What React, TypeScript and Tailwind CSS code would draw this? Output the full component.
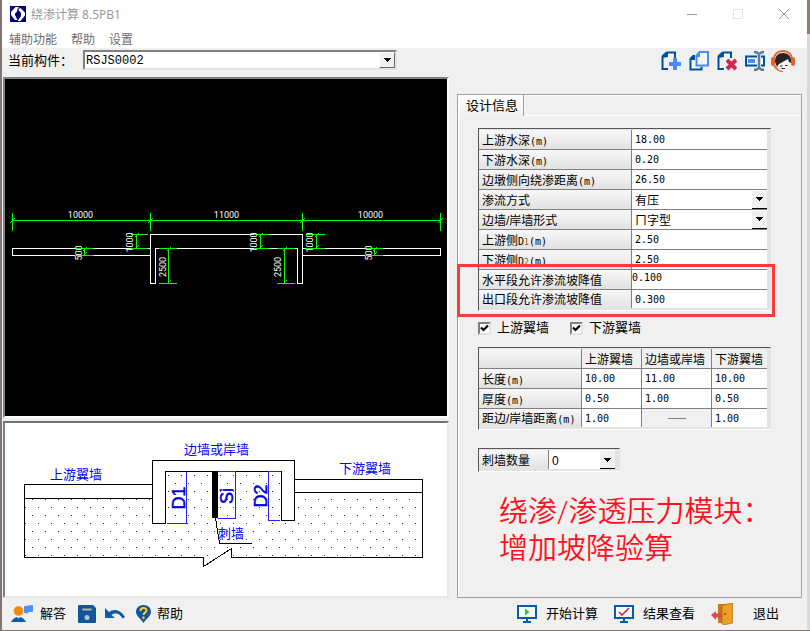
import type { ReactNode } from "react";
import clsx from "clsx";

const MENUS = ["辅助功能", "帮助", "设置"];

const DESIGN_ROWS: { id: string; label: ReactNode; unit?: string; value: string; select?: boolean; editing?: boolean }[] = [
  { id: "up-depth", label: "上游水深", unit: "(m)", value: "18.00" },
  { id: "down-depth", label: "下游水深", unit: "(m)", value: "0.20" },
  { id: "distance", label: "边墩侧向绕渗距离", unit: "(m)", value: "26.50" },
  { id: "mode", label: "渗流方式", value: "有压", select: true },
  { id: "shape", label: "边墙/岸墙形式", value: "ㄇ字型", select: true },
  { id: "d1", label: <>上游侧<Sub index="1" /></>, unit: "(m)", value: "2.50" },
  { id: "d2", label: <>下游侧<Sub index="2" /></>, unit: "(m)", value: "2.50" },
  { id: "slope-h", label: "水平段允许渗流坡降值", value: "0.100", editing: true },
  { id: "slope-o", label: "出口段允许渗流坡降值", value: "0.300" },
];

const WALL_COLUMNS = ["上游翼墙", "边墙或岸墙", "下游翼墙"];

const WALL_ROWS: { label: string; values: (string | null)[] }[] = [
  { label: "长度", values: ["10.00", "11.00", "10.00"] },
  { label: "厚度", values: ["0.50", "1.00", "0.50"] },
  { label: "距边/岸墙距离", values: ["1.00", null, "1.00"] },
];

const LABEL_CELL =
  "border-r border-[#808080] bg-linear-to-b from-[#f8f8f8] to-[#e2e2e2] p-0 pl-[3px] text-left text-xs leading-5 font-normal whitespace-nowrap";
const VALUE_CELL = "border-[#808080] bg-white p-0";
const ROW = "h-5 border-b";
const LAST_ROW = "h-[18px]";
const VALUE_INPUT =
  "block h-[18px] w-full bg-transparent px-[3px] pt-px font-['DejaVu_Sans_Mono','Noto_Sans_CJK_SC',monospace] text-[10px] leading-[18px] outline-none";

function Sub({ index }: { index: string }) {
  return (
    <>
      <span className="font-['DejaVu_Sans_Mono',monospace] text-[10px]">D</span>
      <span className="font-['DejaVu_Sans_Mono',monospace] text-[8px] text-[#8a5a20]">{index}</span>
    </>
  );
}

function Unit({ children }: { children: ReactNode }) {
  return <span className="font-['DejaVu_Sans_Mono',monospace] text-[10px]">{children}</span>;
}

function Arrow() {
  return (
    <svg className="h-1 w-[7px]" viewBox="0 0 7 4" shapeRendering="crispEdges">
      <path d="M0 0h7v1H6v1H5v1H4v1H3V3H2V2H1V1H0z" fill="#000" />
    </svg>
  );
}

function CellSelect({ id, value }: { id: string; value: string }) {
  return (
    <div className="relative flex h-[18px] items-center">
      <select
        id={id}
        defaultValue={value}
        className="h-[18px] w-full appearance-none bg-white pt-px pl-[3px] text-xs leading-[18px] outline-none"
      >
        <option>{value}</option>
      </select>
      <span className="pointer-events-none absolute inset-y-0 right-0 flex w-[15px] items-center justify-center border-b border-black bg-[#f0f0f0]">
        <Arrow />
      </span>
    </div>
  );
}

function Frame({ children, className }: { children: ReactNode; className?: string }) {
  return (
    <div
      className={clsx(
        "border border-t-[#555] border-r-[#e3e3e3] border-b-white border-l-[#555] bg-[#e3e3e3] pt-px pr-[3px] pb-[2px]",
        className,
      )}
    >
      {children}
    </div>
  );
}

interface IVDim {
  x: number;
  y1: number;
  y2: number;
  from: number;
  to: number;
  textX: number;
  children: string;
}

/* Dimension drawn vertically, with its value beside the line */
function VDim({ x, y1, y2, from, to, textX, children }: IVDim) {
  const cy = (y1 + y2) / 2 + 1;
  return (
    <g>
      <path
        d={`M${from} ${y1}H${to}M${from} ${y2}H${to}M${x} ${y1}V${y2}M${x - 2} ${y1 + 3}l4 -4M${x - 2} ${y2 + 1}l4 -4`}
        stroke="#00ff00"
        fill="none"
      />
      <text transform={`translate(${textX + 4} ${cy}) rotate(-90)`} textAnchor="middle" fill="#fff">
        {children}
      </text>
    </g>
  );
}

function CadDrawing() {
  return (
    <svg
      className="block w-full bg-black font-['Liberation_Sans_Narrow','Roboto',sans-serif] text-[9px]"
      viewBox="5 79 442 337"
      shapeRendering="crispEdges"
    >
      <path
        d="M12.5 220.5H440.5M12.5 213V231M150.5 213V231M302.5 213V231M440.5 213V231M10 223l5 -5M148 223l5 -5M300 223l5 -5M438 223l5 -5"
        stroke="#00ff00"
        fill="none"
      />
      <g stroke="#fff" fill="none">
        <path d="M150.5 248.5H12.5V255.5H150.5" />
        <path d="M150.5 234.5H302.5V283.5H297.5V248.5H155.5V283.5H150.5Z" />
        <path d="M302.5 248.5H440.5V255.5H302.5" />
      </g>
      <g textAnchor="middle" fill="#fff">
        <text x="80.5" y="218">10000</text>
        <text x="226.5" y="218">11000</text>
        <text x="370.5" y="218">10000</text>
      </g>
      <VDim x={84.5} y1={248.5} y2={255.5} from={75} to={93} textX={78}>500</VDim>
      <VDim x={136.5} y1={234.5} y2={248.5} from={131} to={148} textX={129}>1000</VDim>
      <VDim x={168.5} y1={248.5} y2={283.5} from={159} to={177} textX={162}>2500</VDim>
      <VDim x={260.5} y1={234.5} y2={248.5} from={254} to={269} textX={253}>1000</VDim>
      <VDim x={284.5} y1={248.5} y2={283.5} from={277} to={295} textX={277}>2500</VDim>
      <VDim x={316.5} y1={234.5} y2={248.5} from={306} to={325} textX={309}>1000</VDim>
      <VDim x={374.5} y1={248.5} y2={255.5} from={365} to={383} textX={368}>500</VDim>
    </svg>
  );
}

function WallDiagram() {
  return (
    <svg
      className="block w-full bg-white font-['Liberation_Sans','Noto_Sans_CJK_SC',sans-serif]"
      viewBox="5 423 442 173"
      shapeRendering="crispEdges"
    >
      <defs>
        <pattern id="soil" x="28" y="499" width="13" height="16" patternUnits="userSpaceOnUse">
          <rect x="4" y="0" width="1" height="1" fill="#333" />
          <rect x="10" y="8" width="1" height="1" fill="#333" />
        </pattern>
      </defs>
      <path
        d="M24 498H152V523H166V472H281V520H294V493H422V557H231V548L203 566V557H24Z"
        fill="url(#soil)"
      />
      <g stroke="#000" fill="none">
        <path d="M152.5 484.5H24.5V557.5H203.5V566.5L231.5 548.5V557.5H422.5V479.5H294.5" />
        <path d="M24.5 498.5H152.5M294.5 492.5H422.5" />
        <path d="M152.5 460.5H294.5V520.5H281.5V471.5H165.5V523.5H152.5Z" />
        <path d="M215.5 518L219.5 543.5H252" />
      </g>
      <rect x="212" y="472" width="6" height="46" fill="#000" />
      <g stroke="#2020ff" fill="none">
        <path d="M186.5 472V523.5M167 523.5H188" />
        <path d="M218 471.5H235.5V518.5H218" />
        <path d="M281 471.5H268.5V520.5H280" />
      </g>
      <g fill="#0000d8" stroke="#0000d8" strokeWidth="0.5" textAnchor="middle" className="text-[18px]">
        <text transform="translate(185 498) rotate(-90)">D1</text>
        <text transform="translate(233 496) rotate(-90)">Si</text>
        <text transform="translate(267 496) rotate(-90)">D2</text>
      </g>
      <g fill="#0000ff" className="text-[13px]">
        <text x="50" y="479">上游翼墙</text>
        <text x="184" y="454">边墙或岸墙</text>
        <text x="339" y="473">下游翼墙</text>
        <text x="218" y="538">刺墙</text>
      </g>
    </svg>
  );
}

function AppLogo() {
  return (
    <svg className="size-4" viewBox="0 0 16 16">
      <rect width="16" height="16" fill="#00007b" />
      <path d="M9 1H5.500L1 6v3l4 5h2.500L5 9V7.500L9.500 3z" fill="#fff" />
      <path d="M10.500 2 15 6.500v3L10.500 15H7.500L11 10V7L8.500 4z" fill="#fff" />
      <path d="M8.500 1.500 7.500 5l3 3" fill="none" stroke="#00007b" />
    </svg>
  );
}

function AddIcon() {
  return (
    <svg className="h-5 w-5" viewBox="0 0 20 20">
      <path d="M7 18H1.500V5.500L6 1.500H14V7" fill="#f4f4f4" stroke="#00519c" strokeWidth="2" />
      <path d="M1 7V4.500L5 1h2v5z" fill="#00519c" />
      <path d="M14 7v12M8 13h12" stroke="#4a8cff" strokeWidth="4" />
    </svg>
  );
}

function CopyIcon() {
  return (
    <svg className="h-5 w-5" viewBox="0 0 20 20">
      <path d="M6 5H4.500L1.500 8V18.500H12.500V15.500" fill="#f4f4f4" stroke="#00519c" strokeWidth="2" />
      <path d="M1 9V7l3-3h2v5z" fill="#00519c" />
      <path d="M7.500 14.500V4.500L10.500 1H19V14.500z" fill="#f3f6fb" stroke="#4a8cff" strokeWidth="2" />
      <path d="M7 6V4l3-3h1v5z" fill="#4a8cff" />
    </svg>
  );
}

function DeleteIcon() {
  return (
    <svg className="h-5 w-5" viewBox="0 0 20 20">
      <path d="M7 18H1.500V5.500L6 1.500H14V7" fill="#f4f4f4" stroke="#00519c" strokeWidth="2" />
      <path d="M1 7V4.500L5 1h2v5z" fill="#00519c" />
      <path d="m10 9 9 9M19 9l-9 9" stroke="#cc2952" strokeWidth="4" />
    </svg>
  );
}

function RenameIcon() {
  return (
    <svg className="h-5 w-5" viewBox="0 0 20 20">
      <path d="M12 5.500H1V14.500H12M16 5.500H19V14.500H16" fill="#f4f4f4" stroke="#00519c" strokeWidth="2" />
      <rect x="3" y="8" width="7" height="4" fill="#4a8cff" />
      <path d="M9 1.200h2.500l2.500 2 2.500-2H19M9 18.800h2.500l2.500-2 2.500 2H19M14 3v14" stroke="#60808f" strokeWidth="2.400" fill="none" />
    </svg>
  );
}

function ServiceIcon() {
  return (
    <svg className="h-[22px] w-6" viewBox="0 0 24 22">
      <path d="M3 10C3 4 7 1 12 1s9 3 9 9" fill="none" stroke="#e4642c" strokeWidth="2" />
      <path d="M3 15c2 4 4 6 9 6" fill="none" stroke="#e4642c" strokeWidth="2" />
      <rect x="0" y="7" width="4" height="9" rx="2" fill="#e4642c" />
      <rect x="20" y="7" width="4" height="9" rx="2" fill="#e4642c" />
      <path d="M5 9h14v5c0 4-3 7-7 7s-7-3-7-7z" fill="#f8f5f3" />
      <path d="M4 12C4 6 7 3 12 3s9 3 8 10l-2-1-1-3-9 5-2 3z" fill="#2a2524" />
      <path d="M9 16h2.500M14 15.500h2.500M10.500 18.500h3.500" stroke="#2a2524" strokeWidth="1.200" />
    </svg>
  );
}

function AnswerIcon() {
  return (
    <svg className="h-[18px] w-[22px]" viewBox="0 0 22 18">
      <path d="M14 1l7-1q1 0 1 1v5q0 1-1 1h-3l-3 2V8h-1q-1 0-1-1V2q0-1 1-1z" fill="#4f90ff" />
      <circle cx="7.500" cy="6" r="4.800" fill="#ee8d0b" />
      <path d="M0 17q2-4 6-5l1.500 1.500L9 12q4 1 6 5z" fill="#0b5ba8" />
    </svg>
  );
}

function SaveIcon() {
  return (
    <svg className="h-[18px] w-[18px]" viewBox="0 0 18 18">
      <path d="M1 0h14l3 3v14q0 1-1 1H1q-1 0-1-1V1q0-1 1-1z" fill="#11569c" />
      <rect x="4" y="3" width="10" height="3" fill="#60808f" />
      <path d="M5 4.500h8" stroke="#b4c4d0" />
      <circle cx="9" cy="12.500" r="2.500" fill="#b4c4d0" />
    </svg>
  );
}

function UndoIcon() {
  return (
    <svg className="h-3 w-5" viewBox="0 0 20 12">
      <path d="M0 0v10h10L6.500 7C11 4 15 6 17.500 10.500L20 9C16 2 9 0 4 4z" fill="#0b5ba8" />
    </svg>
  );
}

function HelpIcon() {
  return (
    <svg className="h-[18px] w-[15px]" viewBox="0 0 15 18">
      <path d="M7.500 0C3 0 0 3 0 7s5 7 7.500 11C10 14 15 11 15 7s-3-7-7.500-7z" fill="#11569c" />
      <path d="M4.500 6C4.500 2 10.500 2 10.500 5.500c0 2-3 2-3 4.500M7.500 11.500v2.500" stroke="#ffcb2e" strokeWidth="2" fill="none" />
    </svg>
  );
}

function MonitorIcon({ children }: { children: ReactNode }) {
  return (
    <svg className="h-[18px] w-5" viewBox="0 0 20 18">
      <rect x="1" y="1" width="18" height="12" fill="#f8fbff" stroke="#0b5ba8" strokeWidth="2" />
      <path d="M10 13v4M6 17h8" stroke="#0b5ba8" strokeWidth="2" />
      {children}
    </svg>
  );
}

function ExitIcon() {
  return (
    <svg className="h-[22px] w-[22px]" viewBox="0 0 22 22">
      <path d="M7 1h14v19H7z" fill="#c77a18" />
      <path d="M11 2 21.500 0v20L13 22l-2-1z" fill="#efa024" stroke="#a65a0b" strokeWidth=".6" />
      <path d="M0 12l5-4v2.500h6v4H5V17z" fill="#e04848" />
      <circle cx="14" cy="11" r="1" fill="#7a4100" />
    </svg>
  );
}

function ToolButton({ icon, label, className }: { icon: ReactNode; label: string; className?: string }) {
  return (
    <button type="button" className={clsx("flex items-center text-[13px] leading-4 whitespace-nowrap", className)}>
      {icon}
      {label}
    </button>
  );
}

function Check({ label }: { label: string }) {
  return (
    <label className="flex items-center gap-[6px] text-[13px] leading-4">
      <span className="relative flex">
        <input
          type="checkbox"
          defaultChecked
          className="peer size-[13px] appearance-none border-2 border-t-[#808080] border-r-[#e3e3e3] border-b-[#e3e3e3] border-l-[#808080] bg-white"
        />
        <svg className="pointer-events-none absolute inset-0 hidden size-[13px] peer-checked:block" viewBox="0 0 13 13">
          <path d="M3 5.500 5.500 8 10 3.500" stroke="#000" strokeWidth="2.200" fill="none" />
        </svg>
      </span>
      {label}
    </label>
  );
}

export default function App() {
  return (
    <div className="flex min-h-screen bg-[#82756e] pb-px pl-[2px] font-['Liberation_Sans','Noto_Sans_CJK_SC',sans-serif] text-black">
      <div className="flex min-w-0 flex-1 flex-col bg-[#f0f0f0]">
        {/* Title bar */}
        <header className="bg-white">
          <div className="flex h-7 items-center pr-[17px] pl-2">
            <AppLogo />
            <h1 className="ml-[5px] pt-px font-['Noto_Sans','Noto_Sans_CJK_SC',sans-serif] text-xs leading-4 text-[#999]">
              绕渗计算 8.5PB1
            </h1>
            <div className="ml-auto flex gap-[34px] text-[#999]">
              <button type="button" aria-label="最小化">
                <svg className="size-3" viewBox="0 0 12 12"><path d="M1 6.500h10" stroke="currentColor" /></svg>
              </button>
              <button type="button" aria-label="最大化" disabled>
                <svg className="size-3" viewBox="0 0 12 12"><path d="M1.500 1.500h9v9h-9z" stroke="#e3e3e3" fill="none" /></svg>
              </button>
              <button type="button" aria-label="关闭">
                <svg className="size-3" viewBox="0 0 12 12"><path d="m1 1 10 10M11 1 1 11" stroke="currentColor" /></svg>
              </button>
            </div>
          </div>
          <nav className="flex h-5 gap-[14px] pt-1 pl-[7px] text-xs leading-4 text-[#6d6d6d]">
            {MENUS.map((menu) => (
              <button key={menu} type="button">{menu}</button>
            ))}
          </nav>
        </header>

        {/* Component picker and tools */}
        <div className="flex h-[29px] items-start pt-[2px] pr-3 pl-[6px]">
          <label htmlFor="component" className="w-[75px] text-[13px] leading-[22px] whitespace-nowrap">当前构件：</label>
          <div className="relative w-[314px]">
            <select
              id="component"
              defaultValue="RSJS0002"
              className="block h-5 w-full appearance-none border-2 border-t-[#808080] border-r-[#e3e3e3] border-b-[#e3e3e3] border-l-[#808080] bg-white pt-px pl-px font-['Liberation_Mono',monospace] text-xs leading-4 outline-none"
            >
              <option>RSJS0002</option>
            </select>
            <span className="pointer-events-none absolute inset-y-[2px] right-[2px] flex w-4 items-center justify-center border border-t-white border-r-[#696969] border-b-[#696969] border-l-white bg-[#f0f0f0]">
              <Arrow />
            </span>
          </div>
          <div className="ml-auto flex items-center gap-2">
            <button type="button" aria-label="新增"><AddIcon /></button>
            <button type="button" aria-label="复制"><CopyIcon /></button>
            <button type="button" aria-label="删除"><DeleteIcon /></button>
            <button type="button" aria-label="重命名"><RenameIcon /></button>
            <button type="button" aria-label="客服" className="-ml-[2px]"><ServiceIcon /></button>
          </div>
        </div>

        <main className="grid flex-1 grid-cols-[446fr_345fr] gap-2 pr-[5px] pl-px">
          {/* Drawings */}
          <div className="flex min-w-0 flex-col gap-[3px]">
            <div className="border-2 border-t-[#808080] border-r-white border-b-white border-l-[#808080]">
              <CadDrawing />
            </div>
            <div className="flex-1 border-2 border-t-[#707070] border-r-[#e8e8e8] border-b-[#e8e8e8] border-l-[#808080] bg-white">
              <WallDiagram />
            </div>
          </div>

          {/* Design data */}
          <section className="mt-[17px] min-w-0 border border-[#a0a0a0] shadow-[inset_1px_1px_0_#fff]">
            <div className="flex h-[21px] border-b border-white">
              <button
                type="button"
                className="ml-px h-[21px] border-r border-[#a0a0a0] bg-linear-to-b from-white to-[#f0f0f0] pr-[5px] pl-[7px] text-[13px] leading-5"
              >
                设计信息
              </button>
            </div>

            <div className="pt-3 pr-[30px] pl-5">
              <div className="relative">
                <Frame>
                  <table className="w-full table-fixed border-separate border-spacing-0">
                    <tbody>
                      {DESIGN_ROWS.map((row, i) => {
                        const rowClass = i === DESIGN_ROWS.length - 1 ? LAST_ROW : ROW;
                        return (
                          <tr key={row.id}>
                            <th scope="row" className={clsx(LABEL_CELL, rowClass, "w-[153px]")}>
                              <label htmlFor={row.id} className="block h-[18px]">
                                {row.label}
                                {row.unit && <Unit>{row.unit}</Unit>}
                              </label>
                            </th>
                            <td className={clsx(VALUE_CELL, rowClass)}>
                              {row.select ? (
                                <CellSelect id={row.id} value={row.value} />
                              ) : (
                                <input
                                  id={row.id}
                                  defaultValue={row.value}
                                  className={clsx(VALUE_INPUT, row.editing && "-mt-1 pl-0")}
                                />
                              )}
                            </td>
                          </tr>
                        );
                      })}
                    </tbody>
                  </table>
                </Frame>
                {/* Highlight round the slope limits */}
                <div className="pointer-events-none absolute top-[136px] right-[-4px] left-[-21px] h-[53px] border-[3px] border-[#fb3a3a]" />
              </div>

              <div className="flex h-9 items-center gap-[21px] pb-[2px]">
                <Check label="上游翼墙" />
                <Check label="下游翼墙" />
              </div>

              <Frame>
                <table className="w-full table-fixed border-separate border-spacing-0">
                  <thead>
                    <tr>
                      <td className={clsx(LABEL_CELL, ROW, "w-[103px]")} />
                      {WALL_COLUMNS.map((name, i) => (
                        <th
                          key={name}
                          scope="col"
                          className={clsx(
                            "h-5 border-b border-[#808080] bg-[#f0f0f0] p-0 pl-[3px] text-left text-xs leading-5 font-normal whitespace-nowrap",
                            i === 0 && "w-[60px] border-r",
                            i === 1 && "w-[70px] border-r",
                          )}
                        >
                          <div className="h-[18px]">{name}</div>
                        </th>
                      ))}
                    </tr>
                  </thead>
                  <tbody>
                    {WALL_ROWS.map((row, r) => {
                      const rowClass = r === WALL_ROWS.length - 1 ? LAST_ROW : ROW;
                      return (
                        <tr key={row.label}>
                          <th scope="row" className={clsx(LABEL_CELL, rowClass)}>
                            <div className="h-[18px]">
                              {row.label}
                              <Unit>(m)</Unit>
                            </div>
                          </th>
                          {row.values.map((value, i) => (
                            <td key={WALL_COLUMNS[i]} className={clsx(VALUE_CELL, rowClass, i < 2 && "border-r")}>
                              {value === null ? (
                                <div className="flex h-[18px] items-center justify-center bg-[#f0f0f0]">
                                  <span className="w-[18px] border-t border-[#808080]" />
                                </div>
                              ) : (
                                <input
                                  aria-label={`${WALL_COLUMNS[i]} ${row.label}`}
                                  defaultValue={value}
                                  className={VALUE_INPUT}
                                />
                              )}
                            </td>
                          ))}
                        </tr>
                      );
                    })}
                  </tbody>
                </table>
              </Frame>

              <Frame className="mt-[18px] flex h-6 w-[142px]">
                <label htmlFor="spur-count" className={clsx(LABEL_CELL, "w-[70px] pt-px")}>
                  刺墙数量
                </label>
                <div className="w-[66px] bg-white pt-px">
                  <CellSelect id="spur-count" value="0" />
                </div>
              </Frame>

              <p className="mt-[22px] pl-[21px] font-['Roboto','Noto_Sans_CJK_SC',sans-serif] text-[29px] leading-[37px] font-[350] whitespace-nowrap text-[#ff1020]">
                绕渗/渗透压力模块：
                <br />
                增加坡降验算
              </p>
            </div>
          </section>
        </main>

        {/* Actions */}
        <footer className="flex h-8 items-center justify-between pr-7 pl-[9px]">
          <div className="flex items-center">
            <ToolButton icon={<AnswerIcon />} label="解答" className="gap-[7px]" />
            <button type="button" aria-label="保存" className="ml-3"><SaveIcon /></button>
            <button type="button" aria-label="撤销" className="ml-[9px]"><UndoIcon /></button>
            <ToolButton icon={<HelpIcon />} label="帮助" className="ml-[11px] gap-[6px]" />
          </div>
          <div className="flex items-center gap-4">
            <ToolButton
              icon={<MonitorIcon><path d="M8 3.500v7L12.500 7z" fill="#00e020" /></MonitorIcon>}
              label="开始计算"
              className="gap-[9px]"
            />
            <ToolButton
              icon={<MonitorIcon><path d="m5 7 3 3 7-7" stroke="#cc2952" strokeWidth="1.600" fill="none" /></MonitorIcon>}
              label="结果查看"
              className="gap-[9px]"
            />
            <ToolButton icon={<ExitIcon />} label="退出" className="gap-5" />
          </div>
        </footer>
      </div>

      {/* Desktop edge to the right of the window */}
      <div className="flex w-[3px] flex-col bg-[#d9d9d9]">
        <div className="h-[34px] bg-[#8d7d74]" />
      </div>
    </div>
  );
}
